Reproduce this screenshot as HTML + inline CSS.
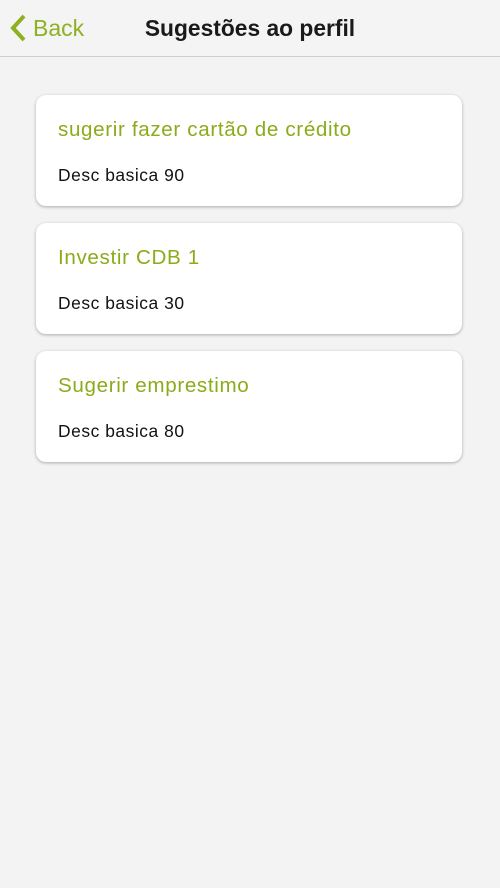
<!DOCTYPE html>
<html><head><meta charset="utf-8"><style>
html,body{margin:0;padding:0}
body{width:500px;height:888px;background:#f3f3f3;font-family:"Liberation Sans",sans-serif;position:relative;overflow:hidden}
.hdr{position:absolute;left:0;top:0;width:500px;height:56px;border-bottom:1px solid #cfcfcf;background:#f4f4f4}
.back{position:absolute;left:33px;top:15px;font-size:23px;color:#8fb020}
.ttl{position:absolute;left:0;width:500px;text-align:center;top:15px;font-size:22.8px;font-weight:bold;color:#1a1a1a}
.card{position:absolute;left:36px;width:426px;height:111px;background:#fff;border-radius:10px;box-shadow:0 1px 3px rgba(0,0,0,.3)}
.card h2{position:absolute;left:22px;top:23px;margin:0;font-size:20.6px;letter-spacing:0.65px;font-weight:normal;color:#8cab1a}
.card p{position:absolute;left:22px;top:70px;margin:0;font-size:17.4px;letter-spacing:0.55px;color:#111}
</style></head><body>
<div class="hdr">
<svg style="position:absolute;left:8px;top:13px" width="20" height="30" viewBox="0 0 20 30"><path d="M16 3 L5 15 L16 27" fill="none" stroke="#8fb020" stroke-width="4"/></svg>
<div class="back">Back</div>
<div class="ttl">Sugestões ao perfil</div>
</div>
<div class="card" style="top:95px"><h2>sugerir fazer cartão de crédito</h2><p>Desc basica 90</p></div>
<div class="card" style="top:223px"><h2>Investir CDB 1</h2><p>Desc basica 30</p></div>
<div class="card" style="top:351px"><h2>Sugerir emprestimo</h2><p>Desc basica 80</p></div>
</body></html>
